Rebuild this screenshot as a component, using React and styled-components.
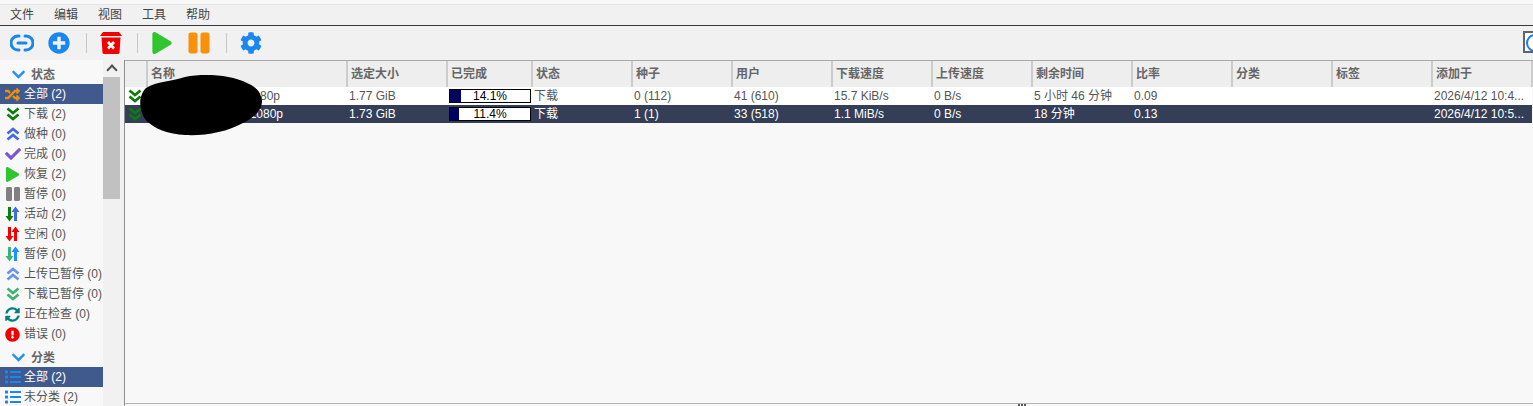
import styled, { createGlobalStyle } from "styled-components";
import {
  FaCheck,
  FaChevronDown,
  FaCog,
  FaExclamationCircle,
  FaList,
  FaPause,
  FaPlay,
  FaPlusCircle,
  FaRandom,
  FaSyncAlt,
} from "react-icons/fa";

const GlobalStyle = createGlobalStyle`
  html, body {
    margin: 0;
    padding: 0;
    background: #f8f8f8;
    overflow: hidden;
  }
  * {
    box-sizing: border-box;
  }
  body {
    font-family: "Liberation Sans", "Noto Sans CJK SC", sans-serif;
    font-size: 12px;
    line-height: 14px;
    color: #555;
  }
`;

const Page = styled.div`
  width: 1533px;
  height: 406px;
  display: flex;
  flex-direction: column;
  overflow: hidden;
`;

const MenuBar = styled.nav`
  height: 22px;
  flex: none;
  margin-top: 4px;
  padding-left: 10px;
  display: flex;
  align-items: center;
  gap: 20px;
  background: #f1f1f1;
  border-top: 1px solid #e4e4e4;
  border-bottom: 1px solid #3a3a3a;
  color: #444;
`;

const Toolbar = styled.div`
  height: 34px;
  flex: none;
  display: flex;
  align-items: center;
  padding-left: 10px;
  background: #f1f1f1;
  position: relative;
`;

const ToolButton = styled.button`
  border: 0;
  background: none;
  padding: 0;
  width: 24px;
  height: 24px;
  margin-right: ${(p) => p.$gap || 0}px;
  display: flex;
  align-items: center;
  justify-content: center;
  color: ${(p) => p.$color};
  font-size: ${(p) => p.$size || 22}px;

  svg {
    flex: none;
  }
`;

const ToolDivider = styled.span`
  width: 1px;
  height: 20px;
  background: #c8c8c8;
  margin-right: ${(p) => p.$gap}px;
`;

const SearchBox = styled.div`
  position: absolute;
  right: 0;
  top: 5px;
  width: 10px;
  height: 22px;
  border: 2px solid #5f6470;
  border-right: 0;
  background: #fff;
  overflow: hidden;

  &::after {
    content: "";
    position: absolute;
    left: 1px;
    top: 1px;
    width: 14px;
    height: 14px;
    border: 2px solid #1a7fe8;
    border-radius: 50%;
  }
`;

const Main = styled.div`
  flex: 1;
  min-height: 0;
  display: flex;
`;

const Sidebar = styled.aside`
  width: 103px;
  flex: none;
  background: #f8f8f8;
  padding-top: 4px;
  overflow: hidden;
`;

const SectionTitle = styled.div`
  height: 20px;
  display: flex;
  align-items: center;
  gap: 5px;
  padding: 1px 0 0 11px;
  margin-top: ${(p) => (p.$spaced ? 3 : 0)}px;
  font-weight: 700;
  color: #666;

  svg {
    color: #1f8fff;
    font-size: 15px;
  }
`;

const FilterRow = styled.div`
  height: 20px;
  display: flex;
  align-items: center;
  gap: 4px;
  padding-left: 5px;
  white-space: nowrap;
  background: ${(p) => (p.$active ? "#415a8e" : "transparent")};
  color: ${(p) => (p.$active ? "#fff" : "#555")};
`;

const FilterIcon = styled.span`
  width: 15px;
  height: 16px;
  flex: none;
  display: flex;
  align-items: center;
  justify-content: center;
  font-size: ${(p) => p.$size || 15}px;
  color: ${(p) => p.$color};

  svg {
    flex: none;
  }
`;

const Track = styled.div`
  width: 17px;
  flex: none;
  background: #f1f1f1;
  display: flex;
  flex-direction: column;
`;

const TrackArrow = styled.div`
  height: 17px;
  display: flex;
  align-items: center;
  justify-content: center;

  &::before {
    content: "";
    width: 6px;
    height: 6px;
    margin-top: 3px;
    border-left: 2px solid #505050;
    border-top: 2px solid #505050;
    transform: rotate(45deg);
  }
`;

const Thumb = styled.div`
  height: 122px;
  background: #c1c1c1;
`;

const Splitter = styled.div`
  width: 5px;
  flex: none;
  background: #f1f1f1;
  border-right: 1px solid #8f8f8f;
`;

const TablePanel = styled.section`
  flex: 1;
  min-width: 0;
  position: relative;
  border-top: 1px solid #a9a9a9;
  border-bottom: 1px solid #b4b4b4;
  margin-bottom: 2px;
`;

const Table = styled.table`
  width: 1407px;
  table-layout: fixed;
  border-collapse: collapse;
`;

const HeadCell = styled.th`
  height: 26px;
  padding: 0 0 0 3px;
  text-align: left;
  font-weight: 700;
  color: #666;
  background: #eeeeee;
  border-right: 2px solid #cccccc;
  overflow: hidden;
  white-space: nowrap;
`;

const Row = styled.tr`
  background: ${(p) => (p.$selected ? "#343f57" : "#fff")};
  color: ${(p) => (p.$selected ? "#fff" : "#555")};
`;

const Cell = styled.td`
  height: 18px;
  padding: 0 0 0 ${(p) => p.$pad ?? 2}px;
  white-space: nowrap;
  overflow: hidden;
  text-overflow: ellipsis;
`;

const StateIcon = styled.span`
  display: flex;
  padding-left: 3px;
  color: #0a7d0a;
`;

const NameText = styled.span`
  display: block;
  width: ${(p) => p.$width}px;
  text-align: right;
`;

const Progress = styled.div`
  width: 82px;
  height: 14px;
  border: 1px solid #000;
  background: #fff;
  position: relative;
  color: #000;
  text-align: center;
  line-height: 12px;
`;

const ProgressFill = styled.div`
  position: absolute;
  left: 0;
  top: 0;
  bottom: 0;
  background: #000060;
`;

const ProgressLabel = styled.span`
  position: relative;
`;

const Scribble = styled.svg`
  position: absolute;
  left: 14px;
  top: 13px;
`;

const ResizeGrip = styled.div`
  position: absolute;
  left: 893px;
  bottom: -3px;
  width: 9px;
  height: 2px;
  background: repeating-linear-gradient(90deg, #555 0 2px, transparent 2px 3px);
`;

function LinkIcon() {
  return (
    <svg width="24" height="20" viewBox="0 0 24 20" fill="none" stroke="#1a86f0" strokeWidth="3" strokeLinecap="round">
      <path d="M9 3H8a6.500 6.500 0 0 0 0 14h1" />
      <path d="M15 3h1a6.500 6.500 0 0 1 0 14h-1" />
      <path d="M8 10h8" />
    </svg>
  );
}

function TrashIcon() {
  return (
    <svg width="22" height="22" viewBox="0 0 22 22">
      <path d="M3 0h16l3 4H0z" fill="#f00000" />
      <path d="M1.500 5.500h19l-1 15q-.2 1.500-2 1.500H4.500q-1.800 0-2-1.500z" fill="#f00000" />
      <path d="M8 10l6 6.500M14 10l-6 6.500" stroke="#fff" strokeWidth="2.600" />
    </svg>
  );
}

function ChevronsIcon({ up }) {
  return (
    <svg width="14" height="14" viewBox="0 0 14 14" fill="none" stroke="currentColor" strokeWidth="2.700">
      <g transform={up ? "rotate(180 7 7)" : undefined}>
        <path d="M1.500 1.500L7 6l5.500-4.500" />
        <path d="M1.500 7.500L7 12l5.500-4.500" />
      </g>
    </svg>
  );
}

function StreamIcon({ down, up }) {
  return (
    <svg width="15" height="16" viewBox="0 0 15 16">
      <path d="M3 1h3v9h2.500L4.500 15.500.5 10H3z" fill={down} />
      <path d="M9 15h3V6h2.500L10.500.5 6.500 6H9z" fill={up} />
    </svg>
  );
}

const menus = ["文件", "编辑", "视图", "工具", "帮助"];

const statusFilters = [
  { label: "全部 (2)", icon: <FaRandom />, color: "#f0900a", active: true },
  { label: "下载 (2)", icon: <ChevronsIcon />, color: "#0a7d0a" },
  { label: "做种 (0)", icon: <ChevronsIcon up />, color: "#4169e1" },
  { label: "完成 (0)", icon: <FaCheck />, color: "#7a55d8", size: 16 },
  { label: "恢复 (2)", icon: <FaPlay />, color: "#2ec52e", size: 15 },
  { label: "暂停 (0)", icon: <FaPause />, color: "#808080", size: 16 },
  { label: "活动 (2)", icon: <StreamIcon down="#0a7d0a" up="#4169e1" /> },
  { label: "空闲 (0)", icon: <StreamIcon down="#f00000" up="#f00000" /> },
  { label: "暂停 (0)", icon: <StreamIcon down="#3cb371" up="#1e90ff" /> },
  { label: "上传已暂停 (0)", icon: <ChevronsIcon up />, color: "#6495ed" },
  { label: "下载已暂停 (0)", icon: <ChevronsIcon />, color: "#3cb371" },
  { label: "正在检查 (0)", icon: <FaSyncAlt />, color: "#008080" },
  { label: "错误 (0)", icon: <FaExclamationCircle />, color: "#f00000" },
];

const categoryFilters = [
  { label: "全部 (2)", active: true },
  { label: "未分类 (2)" },
];

const columns = [
  { title: "", width: 22 },
  { title: "名称", width: 200 },
  { title: "选定大小", width: 100 },
  { title: "已完成", width: 85 },
  { title: "状态", width: 100 },
  { title: "种子", width: 100 },
  { title: "用户", width: 100 },
  { title: "下载速度", width: 100 },
  { title: "上传速度", width: 100 },
  { title: "剩余时间", width: 100 },
  { title: "比率", width: 100 },
  { title: "分类", width: 100 },
  { title: "标签", width: 100 },
  { title: "添加于", width: 100 },
];

const torrents = [
  {
    id: 1,
    name: "1080p",
    nameWidth: 131,
    size: "1.77 GiB",
    progress: 14.1,
    state: "下载",
    seeds: "0 (112)",
    peers: "41 (610)",
    down: "15.7 KiB/s",
    up: "0 B/s",
    eta: "5 小时 46 分钟",
    ratio: "0.09",
    added: "2026/4/12 10:4...",
  },
  {
    id: 2,
    name: "1080p",
    nameWidth: 134,
    size: "1.73 GiB",
    progress: 11.4,
    state: "下载",
    seeds: "1 (1)",
    peers: "33 (518)",
    down: "1.1 MiB/s",
    up: "0 B/s",
    eta: "18 分钟",
    ratio: "0.13",
    added: "2026/4/12 10:5...",
    selected: true,
  },
];

function App() {
  return (
    <Page>
      <GlobalStyle />
      <MenuBar>
        {menus.map((menu) => (
          <span key={menu}>{menu}</span>
        ))}
      </MenuBar>
      <Toolbar>
        <ToolButton $gap={13}>
          <LinkIcon />
        </ToolButton>
        <ToolButton $color="#1a86f0" $gap={15}>
          <FaPlusCircle />
        </ToolButton>
        <ToolDivider $gap={12} />
        <ToolButton $gap={14}>
          <TrashIcon />
        </ToolButton>
        <ToolDivider $gap={12} />
        <ToolButton $color="#2ec52e" $gap={13}>
          <FaPlay />
        </ToolButton>
        <ToolButton $color="#f8900a" $size={24} $gap={15}>
          <FaPause />
        </ToolButton>
        <ToolDivider $gap={12} />
        <ToolButton $color="#1a86f0">
          <FaCog />
        </ToolButton>
        <SearchBox />
      </Toolbar>
      <Main>
        <Sidebar>
          <SectionTitle>
            <FaChevronDown />
            状态
          </SectionTitle>
          {statusFilters.map((filter, i) => (
            <FilterRow key={i} $active={filter.active}>
              <FilterIcon $color={filter.color} $size={filter.size}>
                {filter.icon}
              </FilterIcon>
              {filter.label}
            </FilterRow>
          ))}
          <SectionTitle $spaced>
            <FaChevronDown />
            分类
          </SectionTitle>
          {categoryFilters.map((filter) => (
            <FilterRow key={filter.label} $active={filter.active}>
              <FilterIcon $color="#1a86f0" $size={16}>
                <FaList />
              </FilterIcon>
              {filter.label}
            </FilterRow>
          ))}
        </Sidebar>
        <Track>
          <TrackArrow />
          <Thumb />
        </Track>
        <Splitter />
        <TablePanel>
          <Table>
            <colgroup>
              {columns.map((col, i) => (
                <col key={i} width={col.width} />
              ))}
            </colgroup>
            <thead>
              <tr>
                {columns.map((col, i) => (
                  <HeadCell key={i}>{col.title}</HeadCell>
                ))}
              </tr>
            </thead>
            <tbody>
              {torrents.map((t) => (
                <Row key={t.id} $selected={t.selected}>
                  <Cell $pad={0}>
                    <StateIcon>
                      <ChevronsIcon />
                    </StateIcon>
                  </Cell>
                  <Cell>
                    <NameText $width={t.nameWidth}>{t.name}</NameText>
                  </Cell>
                  <Cell>{t.size}</Cell>
                  <Cell>
                    <Progress>
                      <ProgressFill style={{ width: `${t.progress}%` }} />
                      <ProgressLabel>{t.progress}%</ProgressLabel>
                    </Progress>
                  </Cell>
                  <Cell>{t.state}</Cell>
                  <Cell>{t.seeds}</Cell>
                  <Cell>{t.peers}</Cell>
                  <Cell>{t.down}</Cell>
                  <Cell>{t.up}</Cell>
                  <Cell>{t.eta}</Cell>
                  <Cell>{t.ratio}</Cell>
                  <Cell />
                  <Cell />
                  <Cell>{t.added}</Cell>
                </Row>
              ))}
            </tbody>
          </Table>
          <Scribble width="124" height="62" viewBox="0 0 124 62">
            <path
              d="M7 14C18 7 32 8 46 3C66 -1 92 1 108 9C118 13 122 19 123 27C123 36 116 43 104 49C88 58 66 62 46 61C30 60 14 55 6 45C0 36 -1 22 7 14Z"
              fill="#000"
            />
          </Scribble>
          <ResizeGrip />
        </TablePanel>
      </Main>
    </Page>
  );
}

export default App;
